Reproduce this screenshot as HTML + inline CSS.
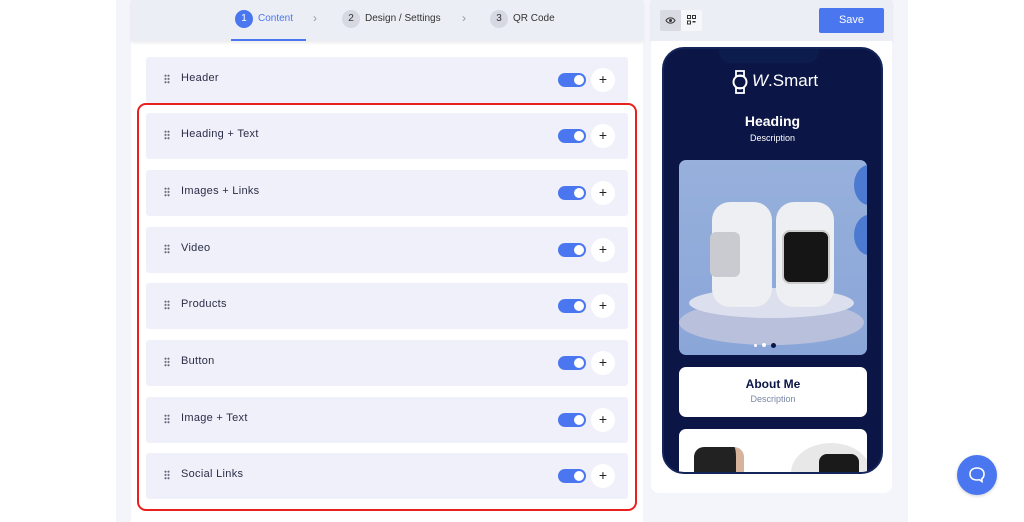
<!DOCTYPE html><html><head><style>
*{margin:0;padding:0;box-sizing:border-box}
body{width:1024px;height:522px;background:#fff;font-family:"Liberation Sans",sans-serif;position:relative;overflow:hidden}
.a{position:absolute}
.row{position:absolute;left:146px;width:482px;height:46px;background:#f0f0fb;border-radius:3px}
.row .dr{position:absolute;left:18px;top:17px;width:6px;height:10px;background:radial-gradient(circle,#667 0.9px,transparent 1.1px) 0 0/3px 3.3px}
.row .t{position:absolute;left:35px;top:15px;font-size:11px;color:#2a2d45;letter-spacing:.3px}
.row .tg{position:absolute;left:412px;top:16px;width:28px;height:14px;border-radius:7px;background:#4a76f0}
.row .tg:after{content:"";position:absolute;right:2px;top:2px;width:10px;height:10px;border-radius:50%;background:#fff}
.row .pl{position:absolute;left:445px;top:11px;width:24px;height:24px;border-radius:50%;background:#fff;text-align:center;line-height:23px;font-size:14px;color:#222}
</style></head><body>
<div class="a" style="left:116px;top:0;width:792px;height:522px;background:#f4f5fa"></div>
<div class="a" style="left:131px;top:0;width:512px;height:522px;background:#fff"></div>
<div class="a" style="left:131px;top:0;width:512px;height:41px;background:#eceef6;box-shadow:0 2px 3px rgba(0,0,0,.08)"></div>
<div class="a" style="left:235px;top:10px;width:18px;height:18px;border-radius:50%;background:#4a76f0;color:#fff;font-size:10px;text-align:center;line-height:18px">1</div>
<div class="a" style="left:258px;top:13px;font-size:10px;color:#4a76f0">Content</div>
<div class="a" style="left:231px;top:39px;width:75px;height:2px;background:#4a76f0"></div>
<div class="a" style="left:313px;top:11px;font-size:12px;color:#999">&#x203A;</div>
<div class="a" style="left:342px;top:10px;width:18px;height:18px;border-radius:50%;background:#d6d8e2;color:#333;font-size:10px;text-align:center;line-height:18px">2</div>
<div class="a" style="left:365px;top:13px;font-size:10px;color:#333">Design / Settings</div>
<div class="a" style="left:462px;top:11px;font-size:12px;color:#999">&#x203A;</div>
<div class="a" style="left:490px;top:10px;width:18px;height:18px;border-radius:50%;background:#d6d8e2;color:#333;font-size:10px;text-align:center;line-height:18px">3</div>
<div class="a" style="left:513px;top:13px;font-size:10px;color:#333">QR Code</div>

<div class="row" style="top:57px"><div class="dr"></div><div class="t">Header</div><div class="tg"></div><div class="pl">+</div></div>
<div class="row" style="top:113px"><div class="dr"></div><div class="t">Heading + Text</div><div class="tg"></div><div class="pl">+</div></div>
<div class="row" style="top:170px"><div class="dr"></div><div class="t">Images + Links</div><div class="tg"></div><div class="pl">+</div></div>
<div class="row" style="top:227px"><div class="dr"></div><div class="t">Video</div><div class="tg"></div><div class="pl">+</div></div>
<div class="row" style="top:283px"><div class="dr"></div><div class="t">Products</div><div class="tg"></div><div class="pl">+</div></div>
<div class="row" style="top:340px"><div class="dr"></div><div class="t">Button</div><div class="tg"></div><div class="pl">+</div></div>
<div class="row" style="top:397px"><div class="dr"></div><div class="t">Image + Text</div><div class="tg"></div><div class="pl">+</div></div>
<div class="row" style="top:453px"><div class="dr"></div><div class="t">Social Links</div><div class="tg"></div><div class="pl">+</div></div>
<div class="a" style="left:137px;top:103px;width:500px;height:408px;border:2px solid #e8201e;border-radius:9px"></div>

<div class="a" style="left:651px;top:0;width:241px;height:41px;background:#eceef6;box-shadow:0 2px 3px rgba(0,0,0,.08)"></div>
<div class="a" style="left:660px;top:10px;width:21px;height:21px;background:#d9dbe3;border-radius:2px"></div>
<svg class="a" style="left:665px;top:16px" width="11" height="9" viewBox="0 0 11 9"><path d="M1 4.5C3 1 8 1 10 4.5 8 8 3 8 1 4.5Z" fill="none" stroke="#333" stroke-width="1"/><circle cx="5.5" cy="4.5" r="1.5" fill="#333"/></svg>
<div class="a" style="left:681px;top:10px;width:21px;height:21px;background:#f6f7fb;border-radius:2px"></div>
<svg class="a" style="left:687px;top:15px" width="9" height="10" viewBox="0 0 9 10"><rect x=".5" y=".5" width="3" height="3" fill="none" stroke="#333"/><rect x="5.5" y=".5" width="3" height="3" fill="none" stroke="#333"/><rect x=".5" y="6" width="3" height="3" fill="none" stroke="#333"/><rect x="5.5" y="6" width="3" height="1.5" fill="#333"/></svg>
<div class="a" style="left:819px;top:8px;width:65px;height:25px;background:#4a76f0;border-radius:2px;color:#fff;font-size:11px;text-align:center;line-height:25px">Save</div>
<div class="a" style="left:651px;top:41px;width:241px;height:452px;background:#fff;border-radius:0 0 8px 8px"></div>

<div class="a" style="left:662px;top:47px;width:221px;height:427px;background:#0b1546;border-radius:22px;border:2px solid #14255a;overflow:hidden">
 <div class="a" style="left:55px;top:-2px;width:100px;height:16px;background:#0c1d4d;border-radius:0 0 12px 12px"></div>
 <svg class="a" style="left:67px;top:21px" width="18" height="24" viewBox="0 0 18 24"><rect x="5" y="1" width="8" height="5" fill="none" stroke="#fff" stroke-width="1.8"/><rect x="5" y="18" width="8" height="5" fill="none" stroke="#fff" stroke-width="1.8"/><circle cx="9" cy="12" r="6.5" fill="none" stroke="#fff" stroke-width="2"/></svg>
 <div class="a" style="left:88px;top:22px;color:#fff;font-size:17px"><i>W</i>.Smart</div>
 <div class="a" style="left:0;width:217px;top:64px;text-align:center;color:#fff;font-size:14px;font-weight:bold">Heading</div>
 <div class="a" style="left:0;width:217px;top:84px;text-align:center;color:#fff;font-size:9px">Description</div>
 <div class="a" style="left:15px;top:111px;width:188px;height:195px;border-radius:7px;background:linear-gradient(#97b0dc,#8aa6d8);overflow:hidden">
  <div class="a" style="left:175px;top:5px;width:30px;height:40px;border-radius:50%;background:#4b7ad0"></div>
  <div class="a" style="left:175px;top:55px;width:30px;height:40px;border-radius:50%;background:#4b7ad0"></div>
  <div class="a" style="left:0;top:140px;width:185px;height:45px;border-radius:50%;background:#b8c0dc"></div>
  <div class="a" style="left:10px;top:128px;width:165px;height:30px;border-radius:50%;background:#dcdfee"></div>
  <div class="a" style="left:33px;top:42px;width:60px;height:105px;border-radius:18px;background:#eeeff2"></div>
  <div class="a" style="left:97px;top:42px;width:58px;height:105px;border-radius:18px;background:#eeeff2"></div>
  <div class="a" style="left:103px;top:70px;width:48px;height:54px;border-radius:8px;background:#151515;border:2px solid #ccc"></div>
  <div class="a" style="left:31px;top:72px;width:30px;height:45px;border-radius:6px;background:#c9cbd0"></div>
  <div class="a" style="left:75px;top:184px;width:3px;height:3px;border-radius:50%;background:#fff"></div>
  <div class="a" style="left:83px;top:183px;width:4px;height:4px;border-radius:50%;background:#fff"></div>
  <div class="a" style="left:92px;top:183px;width:5px;height:5px;border-radius:50%;background:#0b1546"></div>
 </div>
 <div class="a" style="left:15px;top:318px;width:188px;height:50px;border-radius:7px;background:#fff">
  <div style="text-align:center;margin-top:10px;font-size:12px;font-weight:bold;color:#0b1546">About Me</div>
  <div style="text-align:center;margin-top:3px;font-size:9px;color:#7a86a6">Description</div>
 </div>
 <div class="a" style="left:15px;top:380px;width:188px;height:60px;border-radius:7px;background:#fff;overflow:hidden">
  <div class="a" style="left:15px;top:18px;width:50px;height:40px;border-radius:10px;background:#222;border-right:8px solid #d7b39b"></div>
  <div class="a" style="left:112px;top:14px;width:80px;height:60px;border-radius:50%;background:#e8e8e8"></div>
  <div class="a" style="left:140px;top:25px;width:40px;height:30px;border-radius:8px;background:#1a1a1a"></div>
 </div>
</div>

<div class="a" style="left:957px;top:455px;width:40px;height:40px;border-radius:50%;background:#4a76f0;box-shadow:0 1px 3px rgba(0,0,0,.2)"></div>
<svg class="a" style="left:967px;top:465px" width="20" height="20" viewBox="0 0 20 20"><path d="M10 3C5.5 3 3 5.5 3 9s2.5 6 7 6c1 0 2 0 2.5-.3L15 16.5l-.2-2.7C16.3 12.8 17 11 17 9c0-3.5-2.5-6-7-6Z" fill="none" stroke="#fff" stroke-width="1.6"/></svg>
</body></html>
